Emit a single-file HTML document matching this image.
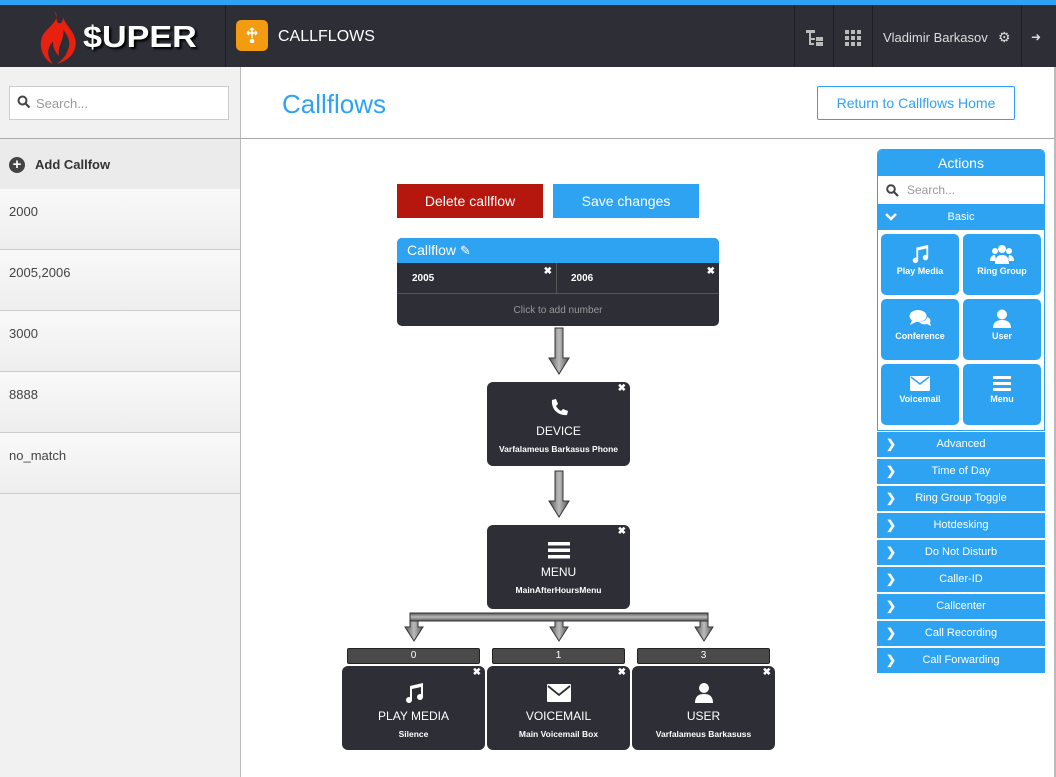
<!DOCTYPE html>
<html><head><meta charset="utf-8"><style>
*{box-sizing:border-box;margin:0;padding:0}
body{width:1056px;height:777px;overflow:hidden;background:#fff;font-family:"Liberation Sans",sans-serif;position:relative}
.a{position:absolute}
.hdr{left:0;top:0;width:1056px;height:67px;background:#2d2e36;border-top:5px solid #2ea3f2}
.vs{position:absolute;top:5px;height:62px;width:1px;background:#1d1e24}
.side{left:0;top:67px;width:241px;height:710px;background:#f1f1f1;border-right:1px solid #bbb}
.item{position:absolute;left:0;width:240px;height:61px;border-bottom:1px solid #ccc;background:linear-gradient(#f9f9f9,#eee);font-size:13px;color:#444;padding:15px 9px}
.node{position:absolute;background:#2d2e36;border-radius:6px;color:#fff;text-align:center}
.node .t{font-size:12px;margin-top:4px}
.node .s{font-size:8.5px;font-weight:bold;margin-top:6px}
.x{position:absolute;right:4px;top:1px;font-size:10px;color:#fff;font-weight:bold}
.lbl{position:absolute;height:16px;background:#4a4a4a;border:1px solid #222;border-radius:2px;color:#fff;font-size:10px;text-align:center;line-height:14px}
.tile{position:absolute;width:78px;height:61px;background:#2ea3f2;border-radius:5px;color:#fff;font-size:9px;font-weight:bold;text-align:center;padding-top:10px}
.cat{position:absolute;left:877px;width:168px;height:25px;background:#2ea3f2;color:#fff;font-size:11px;text-align:center;line-height:25px}
.cat b{position:absolute;left:9px;top:0;font-size:12px}
</style></head><body>
<div class="a hdr"></div>
<div class="vs" style="left:225px"></div>
<div class="vs" style="left:794px"></div>
<div class="vs" style="left:833px"></div>
<div class="vs" style="left:872px"></div>
<div class="vs" style="left:1021px"></div>
<svg class="a" style="left:34px;top:9px" width="46" height="56" viewBox="0 0 44 55"><path d="M20 2C26 12 12 18 8 26C4 34 6 48 18 54C10 44 14 36 18 32C18 40 22 44 24 46C22 36 30 30 28 20C34 28 36 34 32 42C30 48 24 52 22 54C36 50 42 40 40 30C38 20 30 16 28 8C28 14 24 16 22 12Z" fill="#e8200f"/></svg>
<div class="a" style="left:83px;top:19px;font-family:'Liberation Sans',sans-serif;font-weight:bold;font-size:31px;color:#fff;letter-spacing:0px;text-shadow:2px 2px 2px #000;transform:scaleX(1.1);transform-origin:left">$UPER</div>
<div class="a" style="left:236px;top:20px;width:32px;height:31px;background:#f39c12;border-radius:5px"></div>
<svg class="a" style="left:244px;top:26px" width="16" height="20" viewBox="0 0 16 20"><circle cx="8" cy="15" r="2.3" fill="#fff"/><path d="M8 2v10M3 7h10M8 2l-2 2M8 2l2 2M3 7l2-2M3 7l2 2M13 7l-2-2M13 7l-2 2" stroke="#fff" stroke-width="1.5" fill="none"/></svg>
<div class="a" style="left:278px;top:28px;color:#fff;font-size:16px">CALLFLOWS</div>
<svg class="a" style="left:806px;top:30px" width="18" height="17"><rect x="0" y="0" width="9" height="3" fill="#bbb"/><rect x="3" y="3" width="2" height="12" fill="#bbb"/><rect x="3" y="8" width="6" height="2" fill="#bbb"/><rect x="3" y="13" width="5" height="2" fill="#bbb"/><rect x="10" y="7" width="7" height="4" fill="#bbb"/><rect x="10" y="12" width="7" height="4" fill="#bbb"/></svg>
<svg class="a" style="left:845px;top:30px" width="17" height="17"><g fill="#bbb"><rect x="0" y="0" width="4" height="4"/><rect x="6" y="0" width="4" height="4"/><rect x="12" y="0" width="4" height="4"/><rect x="0" y="6" width="4" height="4"/><rect x="6" y="6" width="4" height="4"/><rect x="12" y="6" width="4" height="4"/><rect x="0" y="12" width="4" height="4"/><rect x="6" y="12" width="4" height="4"/><rect x="12" y="12" width="4" height="4"/></g></svg>
<div class="a" style="left:883px;top:30px;color:#ddd;font-size:13px">Vladimir Barkasov</div>
<div class="a" style="left:998px;top:29px;color:#ddd;font-size:14px">⚙</div>
<div class="a" style="left:1031px;top:30px;color:#ddd;font-size:12px">➜</div>

<div class="a side"></div>
<div class="a" style="left:9px;top:86px;width:220px;height:34px;background:#fff;border:1px solid #ccc"></div>
<svg class="a" style="left:17px;top:95px" width="14" height="14"><circle cx="5.5" cy="5.5" r="4" stroke="#444" stroke-width="2" fill="none"/><path d="M8.5 8.5l4 4" stroke="#444" stroke-width="2.2"/></svg>
<div class="a" style="left:36px;top:96px;font-size:13px;color:#999">Search...</div>
<div class="a" style="left:0;top:138px;width:1056px;height:1px;background:#aaa"></div>
<div class="a" style="left:0;top:139px;width:240px;height:50px;background:#ebebeb"></div>
<div class="a" style="left:9px;top:157px;width:16px;height:16px;border-radius:50%;background:#444;color:#fff;font-size:15px;line-height:15px;text-align:center;font-weight:bold">+</div>
<div class="a" style="left:35px;top:157px;font-size:13px;color:#333;font-weight:bold">Add Callfow</div>
<div class="item" style="top:189px">2000</div>
<div class="item" style="top:250px">2005,2006</div>
<div class="item" style="top:311px">3000</div>
<div class="item" style="top:372px">8888</div>
<div class="item" style="top:433px">no_match</div>

<div class="a" style="left:282px;top:89px;font-size:26px;color:#2ea3f2">Callflows</div>
<div class="a" style="left:817px;top:86px;width:198px;height:34px;border:1px solid #2ea3f2;border-radius:2px;color:#2ea3f2;font-size:14px;text-align:center;line-height:32px">Return to Callflows Home</div>

<div class="a" style="left:397px;top:184px;width:146px;height:34px;background:#b5170f;color:#fff;font-size:14px;text-align:center;line-height:34px">Delete callflow</div>
<div class="a" style="left:553px;top:184px;width:146px;height:34px;background:#2ea3f2;color:#fff;font-size:14px;text-align:center;line-height:34px">Save changes</div>

<div class="a" style="left:397px;top:238px;width:322px;height:88px;background:#2d2e36;border-radius:5px;overflow:hidden">
<div style="height:25px;background:#2ea3f2;color:#fff;font-size:14px;padding:4px 10px">Callflow <span style="font-size:13px">✎</span></div>
<div style="position:absolute;top:25px;left:0;width:160px;height:31px;border-right:1px solid #555;border-bottom:1px solid #555;color:#fff;font-size:10px;font-weight:bold;padding:10px 15px">2005<span class="x" style="top:3px">✖</span></div>
<div style="position:absolute;top:25px;left:160px;width:162px;height:31px;border-bottom:1px solid #555;color:#fff;font-size:10px;font-weight:bold;padding:10px 14px">2006<span class="x" style="top:3px">✖</span></div>
<div style="position:absolute;top:67px;width:100%;text-align:center;color:#999;font-size:10px">Click to add number</div>
</div>

<svg class="a" style="left:0;top:0" width="1056" height="777"><defs><linearGradient id="g" x1="0" x2="1"><stop offset="0" stop-color="#555"/><stop offset=".5" stop-color="#bbb"/><stop offset="1" stop-color="#555"/></linearGradient><linearGradient id="h" x1="0" x2="0" y1="0" y2="1"><stop offset="0" stop-color="#555"/><stop offset=".5" stop-color="#bbb"/><stop offset="1" stop-color="#555"/></linearGradient></defs>
<g fill="url(#g)" stroke="#333" stroke-width="1">
<path d="M555 328h8v30h6l-10 16-10-16h6z"/>
<path d="M555 471h8v30h6l-10 16-10-16h6z"/>
<path d="M410 620h8v7h5l-9 14-9-14h5z"/>
<path d="M555 620h8v7h5l-9 14-9-14h5z"/>
<path d="M700 620h8v7h5l-9 14-9-14h5z"/>
</g>
<rect x="410" y="613" width="298" height="8" fill="url(#h)" stroke="#333"/>
</svg>

<div class="node" style="left:487px;top:382px;width:143px;height:84px"><span class="x">✖</span>
<svg style="margin-top:16px" width="20" height="20" viewBox="0 0 20 20"><path d="M3 2l4-1 2 5-2 2c1 2 3 4 5 5l2-2 5 2-1 4c-9 1-16-6-15-15z" fill="#fff"/></svg>
<div class="t" style="margin-top:1px">DEVICE</div><div class="s">Varfalameus Barkasus Phone</div></div>

<div class="node" style="left:487px;top:525px;width:143px;height:84px"><span class="x">✖</span>
<svg style="margin-top:17px" width="22" height="17"><rect y="0" width="22" height="3.5" fill="#fff"/><rect y="6.5" width="22" height="3.5" fill="#fff"/><rect y="13" width="22" height="3.5" fill="#fff"/></svg>
<div class="t" style="margin-top:1px">MENU</div><div class="s">MainAfterHoursMenu</div></div>

<div class="lbl" style="left:347px;top:648px;width:133px">0</div>
<div class="lbl" style="left:492px;top:648px;width:133px">1</div>
<div class="lbl" style="left:637px;top:648px;width:133px">3</div>

<div class="node" style="left:342px;top:666px;width:143px;height:84px"><span class="x">✖</span>
<svg style="margin-top:16px" width="22" height="22" viewBox="0 0 22 22"><path d="M7 4l13-3v14a3 3 0 1 1-2-2.8V5l-9 2v11a3 3 0 1 1-2-2.8z" fill="#fff"/></svg>
<div class="t" style="margin-top:0">PLAY MEDIA</div><div class="s">Silence</div></div>
<div class="node" style="left:487px;top:666px;width:143px;height:84px"><span class="x">✖</span>
<svg style="margin-top:18px" width="24" height="18"><rect x="0" y="0" width="24" height="18" rx="1" fill="#fff"/><path d="M1 2l11 9 11-9" stroke="#2d2e36" stroke-width="1.8" fill="none"/></svg>
<div class="t" style="margin-top:2px">VOICEMAIL</div><div class="s">Main Voicemail Box</div></div>
<div class="node" style="left:632px;top:666px;width:143px;height:84px"><span class="x">✖</span>
<svg style="margin-top:16px" width="22" height="22"><circle cx="11" cy="6" r="5" fill="#fff"/><path d="M2 21c0-7 4-9 9-9s9 2 9 9z" fill="#fff"/></svg>
<div class="t" style="margin-top:0">USER</div><div class="s">Varfalameus Barkasuss</div></div>

<div class="a" style="left:877px;top:149px;width:168px;height:282px;background:#fff;border:1px solid #2ea3f2;border-radius:5px 5px 0 0;overflow:hidden">
<div style="height:26px;background:#2ea3f2;color:#fff;font-size:14px;text-align:center;line-height:26px">Actions</div>
<div style="height:28px;position:relative"><svg style="position:absolute;left:8px;top:8px" width="13" height="13"><circle cx="5" cy="5" r="3.8" stroke="#444" stroke-width="2" fill="none"/><path d="M8 8l4 4" stroke="#444" stroke-width="2.2"/></svg><span style="position:absolute;left:29px;top:7px;font-size:12px;color:#999">Search...</span></div>
<div style="height:26px;background:#2ea3f2;color:#fff;font-size:11px;text-align:center;line-height:26px;position:relative"><svg style="position:absolute;left:7px;top:9px" width="12" height="8"><path d="M1 1l5 5 5-5" stroke="#fff" stroke-width="2.5" fill="none"/></svg>Basic</div>
</div>
<div class="tile" style="left:881px;top:234px"><svg width="20" height="20" viewBox="0 0 22 22"><path d="M7 4l13-3v14a3 3 0 1 1-2-2.8V5l-9 2v11a3 3 0 1 1-2-2.8z" fill="#fff"/></svg><br>Play Media</div>
<div class="tile" style="left:963px;top:234px"><svg width="24" height="20"><circle cx="12" cy="5" r="4" fill="#fff"/><circle cx="5" cy="7" r="3" fill="#fff"/><circle cx="19" cy="7" r="3" fill="#fff"/><path d="M5 20c0-7 3-9 7-9s7 2 7 9z M0 17c0-4 2-6 5-6l1 6z M24 17c0-4-2-6-5-6l-1 6z" fill="#fff"/></svg><br>Ring Group</div>
<div class="tile" style="left:881px;top:299px"><svg width="22" height="20"><ellipse cx="9" cy="7" rx="8.5" ry="6" fill="#fff"/><path d="M3 11l-2 5 6-3z" fill="#fff"/><path d="M18 8c3 1 4 3 3 6l1 3-4-2c-3 1-6 0-8-2 4 0 8-2 8-5z" fill="#fff"/></svg><br>Conference</div>
<div class="tile" style="left:963px;top:299px"><svg width="18" height="20"><circle cx="9" cy="5.5" r="5" fill="#fff"/><path d="M0 19c0-6 4-8 9-8s9 2 9 8z" fill="#fff"/></svg><br>User</div>
<div class="tile" style="left:881px;top:364px"><svg width="20" height="18"><rect y="2" width="20" height="15" rx="1" fill="#fff"/><path d="M1 3l9 7 9-7" stroke="#2ea3f2" stroke-width="1.5" fill="none"/></svg><br>Voicemail</div>
<div class="tile" style="left:963px;top:364px"><svg width="18" height="18"><rect y="2" width="18" height="3" fill="#fff"/><rect y="8" width="18" height="3" fill="#fff"/><rect y="14" width="18" height="3" fill="#fff"/></svg><br>Menu</div>

<div class="cat" style="top:432px"><b>❯</b>Advanced</div>
<div class="cat" style="top:459px"><b>❯</b>Time of Day</div>
<div class="cat" style="top:486px"><b>❯</b>Ring Group Toggle</div>
<div class="cat" style="top:513px"><b>❯</b>Hotdesking</div>
<div class="cat" style="top:540px"><b>❯</b>Do Not Disturb</div>
<div class="cat" style="top:567px"><b>❯</b>Caller-ID</div>
<div class="cat" style="top:594px"><b>❯</b>Callcenter</div>
<div class="cat" style="top:621px"><b>❯</b>Call Recording</div>
<div class="cat" style="top:648px"><b>❯</b>Call Forwarding</div>
<div class="a" style="left:1054px;top:67px;width:2px;height:710px;background:#bbb"></div>
</body></html>
